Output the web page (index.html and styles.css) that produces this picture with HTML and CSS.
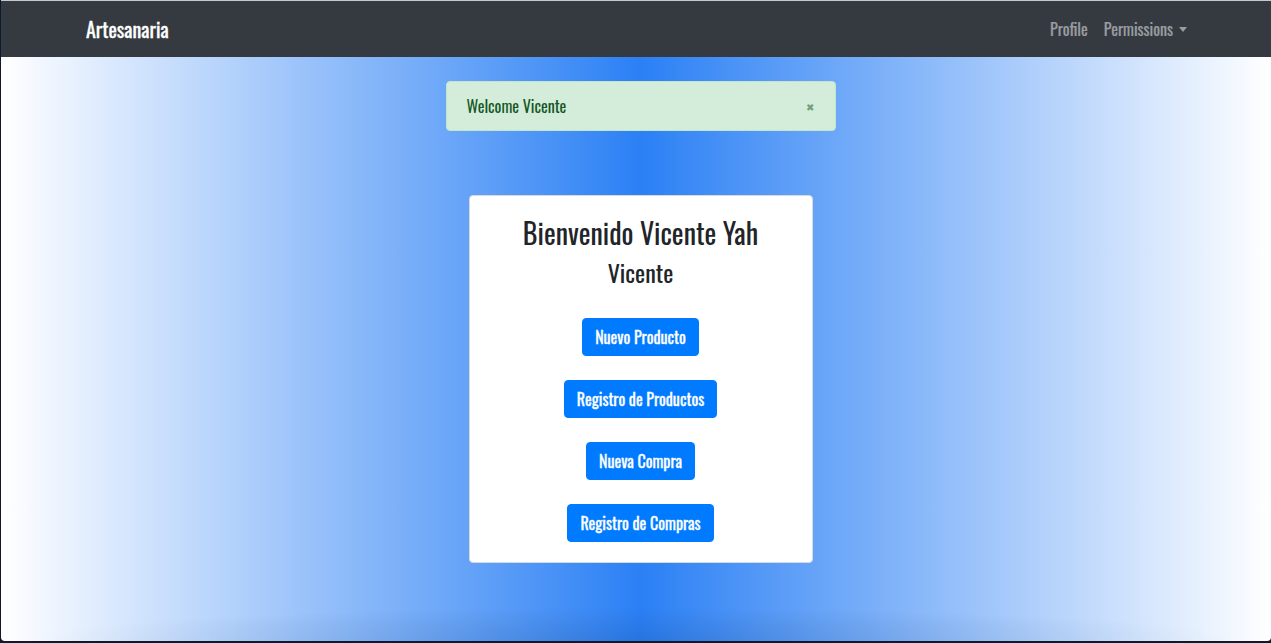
FILE: index.html
```html
<!DOCTYPE html>
<html lang="es">
<head>
<meta charset="utf-8">
<title>Artesanaria</title>
<link rel="stylesheet" href="styles.css">
</head>
<body>
<div class="page">
  <nav class="navbar">
    <div class="nav-inner">
      <a class="brand" href="#">Artesanaria</a>
      <ul class="nav-links">
        <li><a class="nav-link" href="#">Profile</a></li>
        <li><a class="nav-link dropdown" href="#">Permissions<span class="caret"></span></a></li>
      </ul>
    </div>
  </nav>
  <main class="main">
    <div class="alert">
      <span class="alert-text">Welcome Vicente</span>
      <span class="alert-close">&#10006;</span>
    </div>
    <section class="card">
      <h3 class="card-title">Bienvenido Vicente Yah</h3>
      <h4 class="card-sub">Vicente</h4>
      <div class="actions">
        <a class="btn" href="#">Nuevo Producto</a>
        <a class="btn" href="#">Registro de Productos</a>
        <a class="btn" href="#">Nueva Compra</a>
        <a class="btn" href="#">Registro de Compras</a>
      </div>
    </section>
  </main>
</div>
</body>
</html>
```
FILE: styles.css
```css
html {
  background: #0d1a2c;
  height: 100%;
}
body {
  margin: 0;
  height: 100%;
  font-family: "Oswald", "Open Sans", sans-serif;
  font-size: 16px;
  line-height: 1.5;
}
.page {
  box-sizing: border-box;
  height: 641px;
  margin-left: 1px;
  border-radius: 0 0 4px 4px;
  overflow: hidden;
  display: flex;
  flex-direction: column;
  background:
    radial-gradient(ellipse 48% 34px at 50% 100%, rgba(10, 40, 90, 0.14), rgba(10, 40, 90, 0) 100%),
    linear-gradient(to right, #ffffff 0%, #2b80f5 50.4%, #ffffff 100%);
}
.navbar {
  background: #343a40;
  border-top: 1px solid #c7c8ca;
  height: 56px;
  flex: none;
  display: flex;
  align-items: center;
}
.nav-inner {
  flex: 1;
  display: flex;
  align-items: center;
  justify-content: space-between;
  padding: 0 76px 0 85px;
}
.brand {
  color: #fff;
  text-decoration: none;
  font-size: 20px;
  line-height: 30px;
  font-weight: 400;
  -webkit-text-stroke: 0.3px #fff;
}
.nav-links {
  list-style: none;
  margin: 0;
  padding: 0;
  display: flex;
}
.nav-link {
  color: #9a9da0;
  text-decoration: none;
  font-size: 16px;
  font-weight: 400;
  display: flex;
  align-items: center;
  padding: 0 8px;
  -webkit-text-stroke: 0.2px #9a9da0;
}
.caret {
  display: inline-block;
  margin-left: 6px;
  border-top: 5px solid #9a9da0;
  border-left: 4px solid transparent;
  border-right: 4px solid transparent;
}
.main {
  display: flex;
  flex-direction: column;
  align-items: center;
  padding-top: 24px;
  padding-left: 9px;
}
.alert {
  box-sizing: border-box;
  width: 390px;
  height: 50px;
  background: #d4edda;
  border: 1px solid #c3e6cb;
  border-radius: 4px;
  color: #155724;
  display: flex;
  align-items: center;
  justify-content: space-between;
  padding: 0 20px;
  font-size: 16px;
}
.alert-close {
  color: #72a07c;
  font-size: 10px;
  margin-right: 1px;
}
.card {
  box-sizing: border-box;
  margin-top: 64px;
  width: 344px;
  background: #fff;
  border: 1px solid #d7dadd;
  border-radius: 4px;
  display: flex;
  flex-direction: column;
  align-items: center;
  padding: 20px;
  color: #212529;
}
.card-title {
  margin: 0 0 8px;
  font-size: 28px;
  font-weight: 400;
  line-height: 1.2;
}
.card-sub {
  margin: 0 0 8px;
  font-size: 24px;
  font-weight: 400;
  line-height: 1.2;
}
.actions {
  margin-top: 24px;
  display: flex;
  flex-direction: column;
  align-items: center;
  gap: 24px;
}
.btn {
  height: 38px;
  box-sizing: border-box;
  padding: 0 12px;
  display: flex;
  align-items: center;
  background: #007bff;
  border: 1px solid #007bff;
  color: #fff;
  text-decoration: none;
  border-radius: 4px;
  font-size: 16px;
  font-weight: 400;
  -webkit-text-stroke: 0.3px #fff;
}
```
